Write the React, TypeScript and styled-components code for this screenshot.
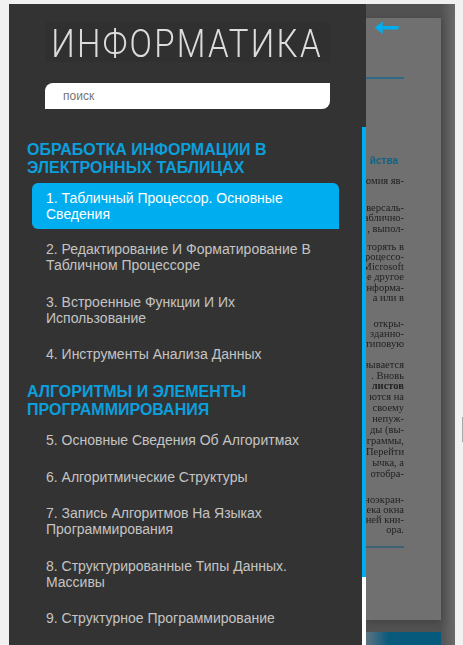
import styled, { createGlobalStyle } from "styled-components";

const GlobalStyle = createGlobalStyle`
  html, body {
    margin: 0;
    padding: 0;
    height: 100%;
    overflow: hidden;
    background: #f1f1f1;
  }
  body {
    font-family: "Liberation Sans", Arial, sans-serif;
  }
`;

const sections = [
  {
    title: "Обработка информации в электронных таблицах",
    items: [
      "1. Табличный Процессор. Основные Сведения",
      "2. Редактирование И Форматирование В Табличном Процессоре",
      "3. Встроенные Функции И Их Использование",
      "4. Инструменты Анализа Данных",
    ],
  },
  {
    title: "Алгоритмы и элементы программирования",
    items: [
      "5. Основные Сведения Об Алгоритмах",
      "6. Алгоритмические Структуры",
      "7. Запись Алгоритмов На Языках Программирования",
      "8. Структурированные Типы Данных. Массивы",
      "9. Структурное Программирование",
    ],
  },
];

const bookBlocks = [
  { gap: 18, pitch: 1, lines: ["версаль-", "аблично-", ", выпол-"] },
  { gap: 9, pitch: 1, lines: ["торять в", "процессо-", "Microsoft", "е другое", "информа-", "а или в"] },
  { gap: 17, pitch: 1, lines: ["откры-", "зданно-", "типовую"] },
  { gap: 11, pitch: 1.7, lines: ["зывается", ". Вновь", "листов", "ются на", "своему", "непуж-", "ды (вы-", "граммы,", "Перейти", "ычка, а", "отобра-"] },
  { gap: 17, pitch: 1, lines: ["ноэкран-", "ека окна", "ней кни-", "ора."] },
];

const App = () => {
  return (
    <>
      <GlobalStyle />
      <Screen>
        <Sidebar>
          <Logo>
            <LogoText>ИНФОРМАТИКА</LogoText>
          </Logo>
          <SearchBox placeholder="поиск" />
          <Menu>
            {sections.map((section) => (
              <Section key={section.title}>
                <SectionTitle>{section.title}</SectionTitle>
                {section.items.map((item) => (
                  <MenuItem key={item} $active={item.startsWith("1.")}>
                    {item}
                  </MenuItem>
                ))}
              </Section>
            ))}
          </Menu>
        </Sidebar>
        <ScrollRail>
          <RailTop />
          <ScrollThumb />
        </ScrollRail>
        <Book>
          <BookPage>
            <BackArrow width="26" height="14" viewBox="0 0 26 14">
              <path d="M0.5 6.5 L9 0.5 L8.5 5 L24.5 5 L24.5 8.5 L8.5 8.5 L9 13 Z" fill="#00aeef" />
            </BackArrow>
            <Rule />
            <BookHeading>йства</BookHeading>
            <BookIntro>юмия яв-</BookIntro>
            {bookBlocks.map((block) => (
              <BookBlock key={block.lines[0]} $gap={block.gap} $pitch={block.pitch}>
                {block.lines.map((line) => (
                  <BookLine key={line} $bold={line === "листов"}>
                    {line}
                  </BookLine>
                ))}
              </BookBlock>
            ))}
            <BottomRule />
          </BookPage>
          <NextPage />
        </Book>
        <EdgeMark />
      </Screen>
    </>
  );
};

const Screen = styled.div`
  position: relative;
  display: flex;
  align-items: flex-start;
  height: 645px;
  padding: 4px 8px 0 9px;
  box-sizing: border-box;
  overflow: hidden;
`;

const Sidebar = styled.aside`
  width: 353px;
  height: 641px;
  flex: none;
  background: #333333;
  overflow: hidden;
`;

const Logo = styled.div`
  margin: 18px 0 0 36px;
  width: 285px;
  height: 40px;
  background: #303030;
  display: flex;
  align-items: center;
  justify-content: center;
`;

const LogoText = styled.div`
  margin-top: 3px;
  font-family: Roboto, "Liberation Sans", sans-serif;
  font-weight: 300;
  font-size: 38px;
  letter-spacing: 2.6px;
  color: #dcdcdc;
  white-space: nowrap;
  transform: scaleX(0.87);
`;

const SearchBox = styled.input`
  display: block;
  margin: 21px 0 0 36px;
  width: 285px;
  height: 26px;
  padding: 0 0 0 18px;
  box-sizing: border-box;
  border: none;
  outline: none;
  background: #fff;
  border-radius: 8px 0 8px 0;
  font-family: "Liberation Sans", Arial, sans-serif;
  font-size: 12px;

  &::placeholder {
    color: #757575;
    opacity: 1;
  }
`;

const Menu = styled.nav`
  margin-top: 32px;
`;

const Section = styled.section`
  margin-bottom: 11px;
`;

const SectionTitle = styled.h2`
  margin: 0 0 3px 18px;
  font-size: 16px;
  line-height: 18px;
  font-weight: 700;
  text-transform: uppercase;
  color: #0b9fdc;
`;

const MenuItem = styled.div<{ $active: boolean }>`
  margin-left: 23px;
  width: 307px;
  box-sizing: border-box;
  padding: ${(p) => (p.$active ? "6.7px 14px" : "10px 14px")};
  margin-top: ${(p) => (p.$active ? "6px" : "0")};
  margin-bottom: ${(p) => (p.$active ? "2px" : "0")};
  font-size: 14px;
  line-height: 16.3px;
  color: ${(p) => (p.$active ? "#ffffff" : "#c4c4c4")};
  background: ${(p) => (p.$active ? "#00aeef" : "transparent")};
  border-radius: ${(p) => (p.$active ? "6px 6px 0 6px" : "0")};
`;

const ScrollRail = styled.div`
  width: 4px;
  height: 641px;
  flex: none;
  background: #ffffff;
  display: flex;
  flex-direction: column;
`;

const RailTop = styled.div`
  height: 123px;
  background: #333333;
`;

const ScrollThumb = styled.div`
  height: 450px;
  background: #00aeef;
`;

const Book = styled.div`
  width: 89px;
  height: 641px;
  flex: none;
  background: linear-gradient(to right, #525252 0, #525252 84%, #6a6a6a 100%);
  overflow: hidden;
`;

const BookPage = styled.div`
  width: 75px;
  height: 602px;
  margin-top: 14px;
  background: #707070;
  padding-top: 1px;
  box-sizing: border-box;
  box-shadow: 0 2px 8px rgba(40, 40, 40, 0.4);
  display: flex;
  flex-direction: column;
  align-items: flex-end;
  padding-right: 37px;
  overflow: hidden;
`;

const BackArrow = styled.svg`
  display: block;
  align-self: flex-start;
  margin: 2px 0 0 8px;
  flex: none;
  filter: blur(0.4px);
`;

const Rule = styled.div`
  width: 38px;
  height: 2px;
  flex: none;
  margin: 42px 0 0 0;
  background: #2d6a85;
  filter: blur(0.4px);
`;

const BookHeading = styled.div`
  margin: 76px 6px 0 0;
  font-size: 10px;
  line-height: 12px;
  font-weight: 700;
  color: #0f6485;
  white-space: nowrap;
  filter: blur(0.4px);
`;

const BookLine = styled.div<{ $bold?: boolean }>`
  width: 38px;
  display: flex;
  justify-content: flex-end;
  font-family: "Liberation Serif", serif;
  font-size: 10.5px;
  line-height: 9.2px;
  font-weight: ${(p) => (p.$bold ? 700 : 400)};
  color: #222222;
  white-space: nowrap;
  filter: blur(0.45px);
`;

const BookIntro = styled(BookLine)`
  margin-top: 9px;
`;

const BookBlock = styled.div<{ $gap: number; $pitch: number }>`
  margin-top: ${(p) => p.$gap}px;
  display: flex;
  flex-direction: column;
  align-items: flex-end;
  gap: ${(p) => p.$pitch}px;
`;

const BottomRule = styled.div`
  width: 38px;
  height: 2px;
  flex: none;
  margin-top: 11px;
  background: #3d6273;
  filter: blur(0.4px);
`;

const NextPage = styled.div`
  width: 75px;
  height: 30px;
  margin-top: 12px;
  background: linear-gradient(to right, #5d7480 0, #0a5a7c 30%, #055a7d 100%);
`;

const EdgeMark = styled.div`
  position: absolute;
  right: 0;
  top: 417px;
  width: 1px;
  height: 25px;
  background: #a8a8a8;
`;

export default App;
